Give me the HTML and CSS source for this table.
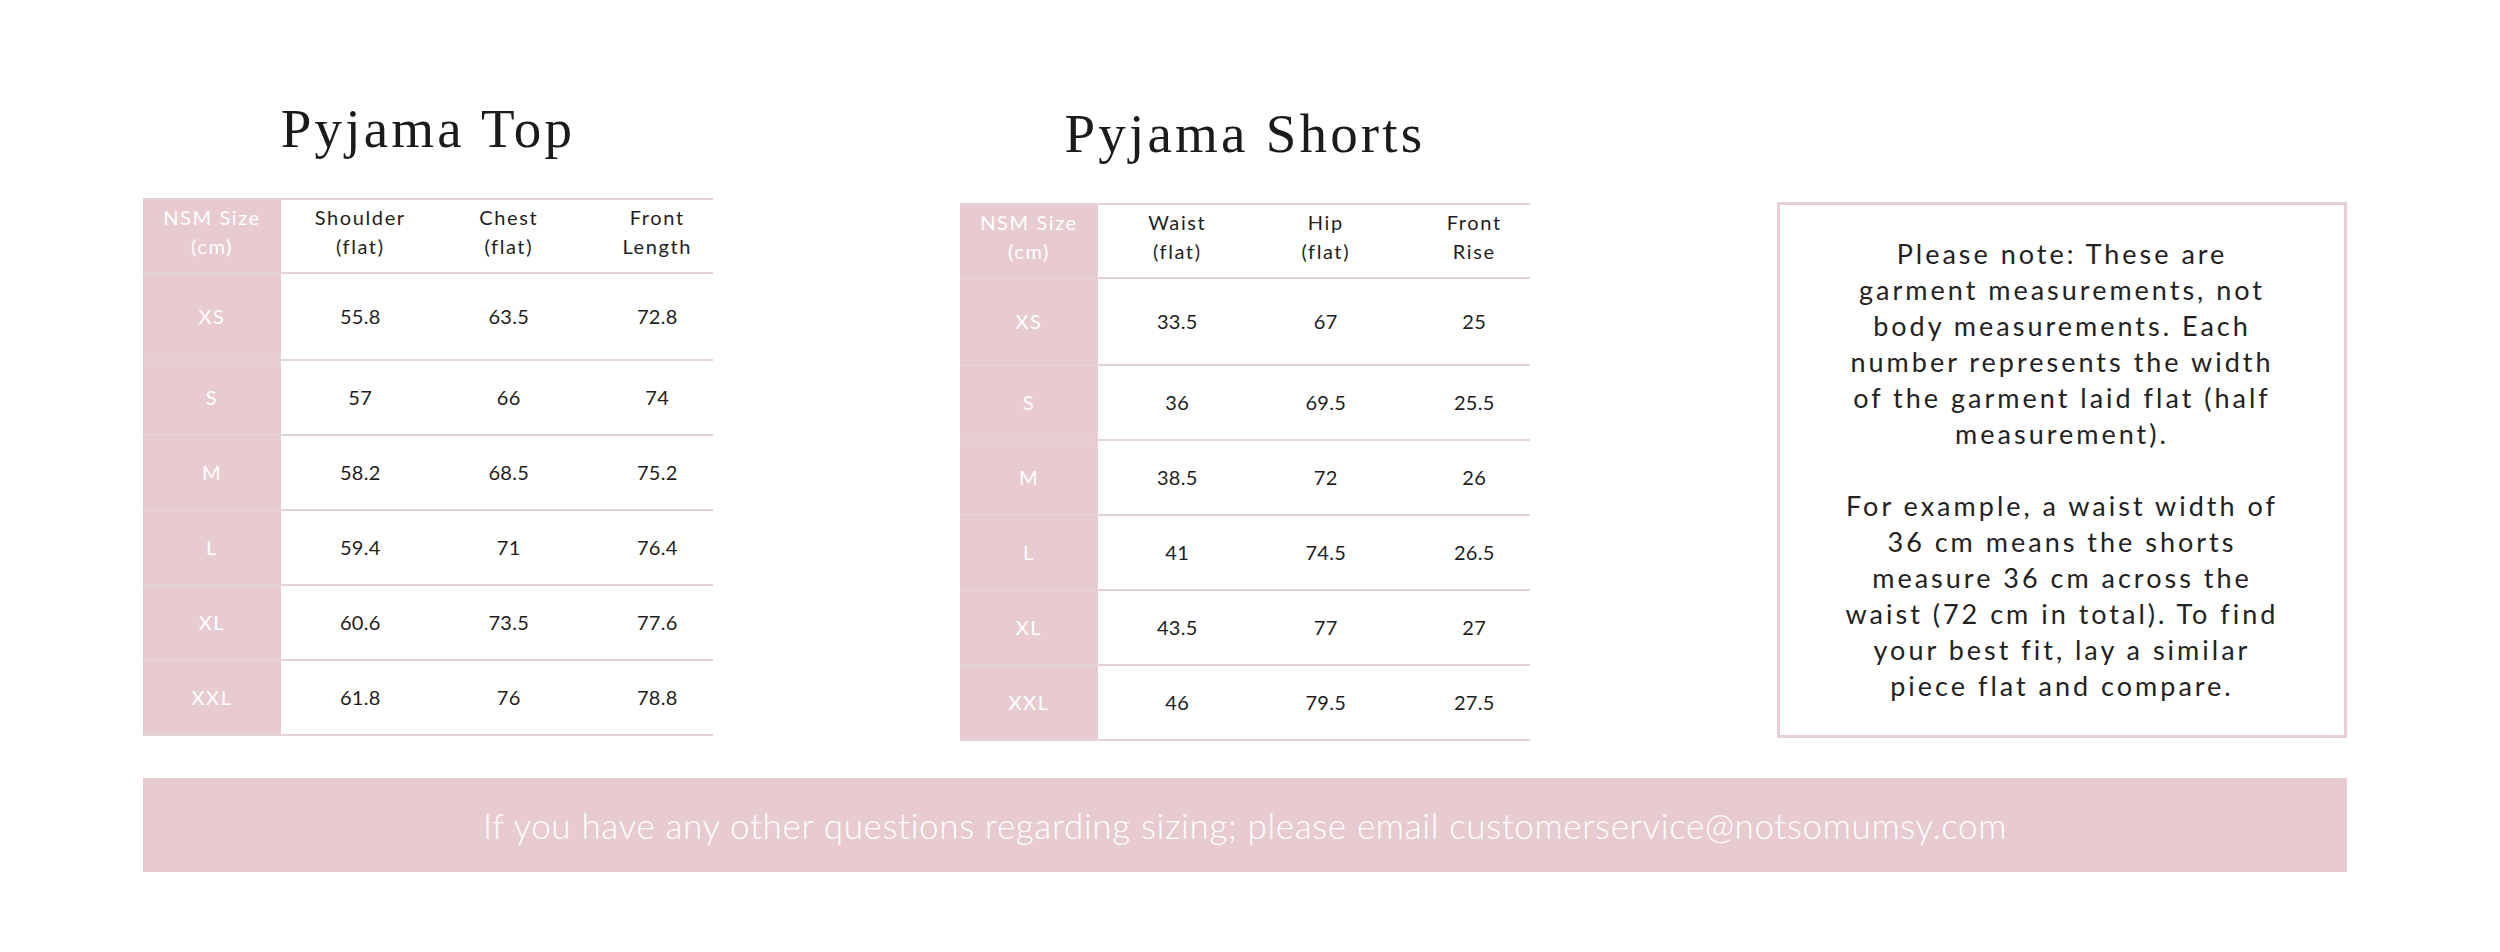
FILE: index.html
```html
<!DOCTYPE html>
<html lang="en">
<head>
<meta charset="utf-8">
<title>Pyjama Size Guide</title>
<link rel="stylesheet" href="styles.css">
</head>
<body>
<div class="page">
  <div class="top">
    <section class="chart">
      <h2 class="title">Pyjama Top</h2>
      <div class="table">
        <div class="row head">
          <div class="cell size">NSM Size<br>(cm)</div>
          <div class="cell">Shoulder<br>(flat)</div>
          <div class="cell">Chest<br>(flat)</div>
          <div class="cell">Front<br>Length</div>
        </div>
        <div class="row first">
          <div class="cell size">XS</div><div class="cell num">55.8</div><div class="cell num">63.5</div><div class="cell num">72.8</div>
        </div>
        <div class="row">
          <div class="cell size">S</div><div class="cell num">57</div><div class="cell num">66</div><div class="cell num">74</div>
        </div>
        <div class="row">
          <div class="cell size">M</div><div class="cell num">58.2</div><div class="cell num">68.5</div><div class="cell num">75.2</div>
        </div>
        <div class="row">
          <div class="cell size">L</div><div class="cell num">59.4</div><div class="cell num">71</div><div class="cell num">76.4</div>
        </div>
        <div class="row">
          <div class="cell size">XL</div><div class="cell num">60.6</div><div class="cell num">73.5</div><div class="cell num">77.6</div>
        </div>
        <div class="row">
          <div class="cell size">XXL</div><div class="cell num">61.8</div><div class="cell num">76</div><div class="cell num">78.8</div>
        </div>
      </div>
    </section>

    <section class="chart chart-shorts">
      <h2 class="title">Pyjama Shorts</h2>
      <div class="table">
        <div class="row head">
          <div class="cell size">NSM Size<br>(cm)</div>
          <div class="cell">Waist<br>(flat)</div>
          <div class="cell">Hip<br>(flat)</div>
          <div class="cell">Front<br>Rise</div>
        </div>
        <div class="row first">
          <div class="cell size">XS</div><div class="cell num">33.5</div><div class="cell num">67</div><div class="cell num">25</div>
        </div>
        <div class="row">
          <div class="cell size">S</div><div class="cell num">36</div><div class="cell num">69.5</div><div class="cell num">25.5</div>
        </div>
        <div class="row">
          <div class="cell size">M</div><div class="cell num">38.5</div><div class="cell num">72</div><div class="cell num">26</div>
        </div>
        <div class="row">
          <div class="cell size">L</div><div class="cell num">41</div><div class="cell num">74.5</div><div class="cell num">26.5</div>
        </div>
        <div class="row">
          <div class="cell size">XL</div><div class="cell num">43.5</div><div class="cell num">77</div><div class="cell num">27</div>
        </div>
        <div class="row">
          <div class="cell size">XXL</div><div class="cell num">46</div><div class="cell num">79.5</div><div class="cell num">27.5</div>
        </div>
      </div>
    </section>

    <aside class="note">
      <p>Please note: These are<br>garment measurements, not<br>body measurements. Each<br>number represents the width<br>of the garment laid flat (half<br>measurement).</p>
      <p>For example, a waist width of<br>36 cm means the shorts<br>measure 36 cm across the<br>waist (72 cm in total). To find<br>your best fit, lay a similar<br>piece flat and compare.</p>
    </aside>
  </div>

  <footer class="contact">If you have any other questions regarding sizing; please email customerservice@notsomumsy.com</footer>
</div>
</body>
</html>
```

FILE: styles.css
```css
html, body {
  margin: 0;
  padding: 0;
  background: #ffffff;
}

.page {
  width: 2204px;
  padding: 102px 0 0 143px;
}

.top {
  display: flex;
  align-items: flex-start;
  gap: 247px;
}

.chart {
  width: 570px;
}

.chart-shorts {
  margin-top: 5px;
}

.title {
  margin: 0 0 42px;
  font-family: "Liberation Serif", "Times New Roman", serif;
  font-weight: 400;
  font-size: 55px;
  line-height: 54px;
  letter-spacing: 3.2px;
  text-align: center;
  color: #1b1b1b;
}

.table {
  border-top: 2px solid #e4d2d6;
  font-family: "Lato", "Open Sans", sans-serif;
  font-size: 20px;
  color: #1e1e1e;
}

.row {
  display: grid;
  grid-template-columns: 138px repeat(3, 148.5px);
  height: 73px;
  border-bottom: 2px solid #e4d2d6;
}

.row.head {
  height: 72px;
}

.row.first {
  height: 85px;
}

.cell {
  display: flex;
  align-items: center;
  justify-content: center;
  text-align: center;
  padding-left: 10px;
  line-height: 27px;
  letter-spacing: 1.6px;
}

.row.head .cell {
  line-height: 29px;
  padding-bottom: 9px;
}

.cell.size {
  padding-left: 0;
  background: #e7cbd1;
  color: #ffffff;
}

.cell.num {
  letter-spacing: 0.3px;
}

.note {
  width: 570px;
  height: 536px;
  box-sizing: border-box;
  margin-top: 100px;
  border: 3px solid #e9d0d6;
  display: flex;
  flex-direction: column;
  align-items: center;
  justify-content: center;
  gap: 36px;
  font-family: "Lato", "Open Sans", sans-serif;
  font-size: 27px;
  line-height: 36px;
  letter-spacing: 3px;
  color: #222222;
  text-align: center;
}

.note p {
  margin: 0;
  white-space: nowrap;
}

.contact {
  margin-top: 37px;
  height: 94px;
  background: #e7cbd1;
  display: flex;
  align-items: center;
  justify-content: center;
  font-family: "Lato", "Open Sans", sans-serif;
  font-weight: 300;
  font-size: 35px;
  letter-spacing: 0.65px;
  color: #ffffff;
}
```
